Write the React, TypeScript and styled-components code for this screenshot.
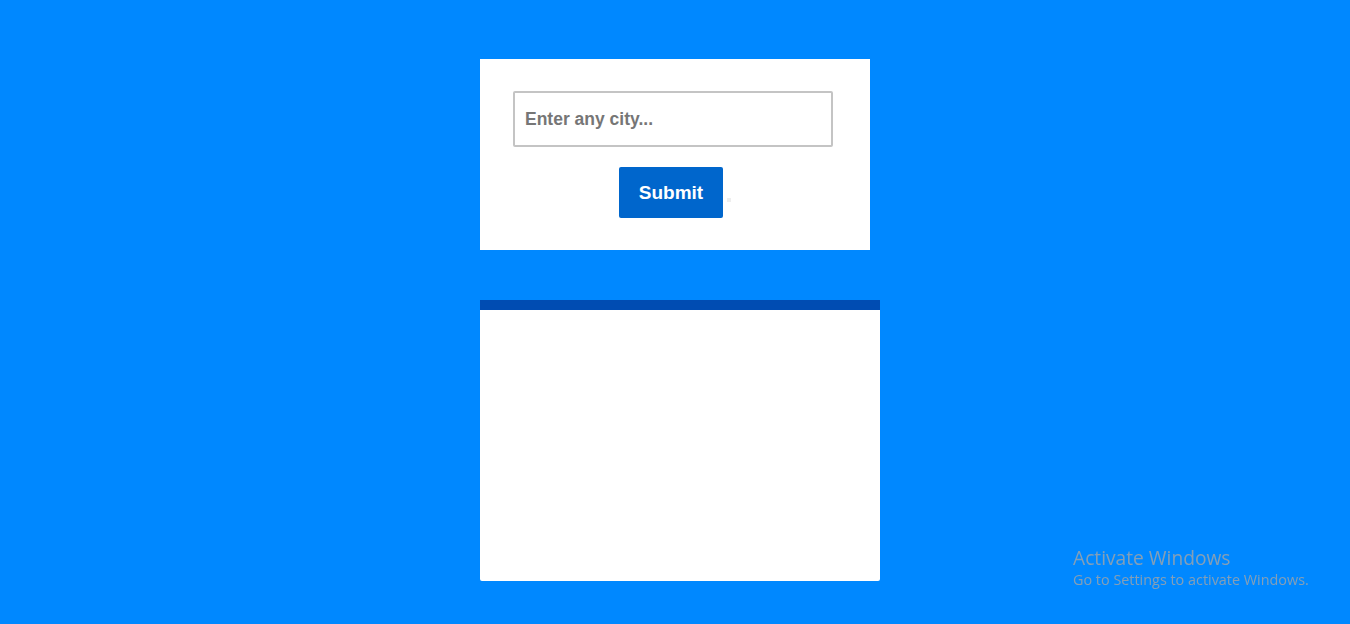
import React from "react";
import styled, { createGlobalStyle } from "styled-components";

const Global = createGlobalStyle`
  html, body { margin: 0; padding: 0; background: #0088ff; }
  body { font-family: "Liberation Sans", Arial, sans-serif; min-height: 624px; }
`;

const Page = styled.div`
  width: 390px;
  margin: 0 auto;
  padding-top: 59px;
  display: flex;
  flex-direction: column;
  gap: 50px;
`;

const SearchCard = styled.form`
  width: 390px;
  height: 191px;
  box-sizing: border-box;
  background: #fff;
  padding-top: 32px;
  display: flex;
  flex-direction: column;
  align-items: center;
`;

const CityInput = styled.input`
  width: 320px;
  height: 56px;
  box-sizing: border-box;
  margin-right: 4px;
  border: 2px solid #c4c4c4;
  border-radius: 2px;
  padding: 0 10px;
  font-family: "Liberation Sans", Arial, sans-serif;
  font-size: 17.5px;
  font-weight: bold;
  color: #555;
  outline: none;
  &::placeholder { color: #767676; opacity: 1; }
`;

const ButtonRow = styled.div`
  margin-top: 20px;
  display: flex;
  align-items: flex-end;
  gap: 4px;
`;

const SubmitButton = styled.button`
  width: 104px;
  height: 51px;
  border: none;
  border-radius: 2px;
  background: #0066cc;
  color: #fff;
  font-family: "Liberation Sans", Arial, sans-serif;
  font-size: 19px;
  font-weight: bold;
  cursor: pointer;
`;

const Dot = styled.span`
  width: 4px;
  height: 4px;
  background: #eeeeee;
  margin-bottom: 16px;
`;

const ResultCard = styled.div`
  width: 400px;
  height: 281px;
  box-sizing: border-box;
  background: #fff;
  border-top: 10px solid #004cb2;
  border-radius: 0 0 2px 2px;
`;

const Watermark = styled.div`
  position: fixed;
  left: 1073px;
  top: 546px;
  font-family: "Open Sans", "Noto Sans", sans-serif;
  color: rgba(165, 165, 165, 0.8);
  pointer-events: none;
`;

const WatermarkTitle = styled.div`
  font-size: 19.2px;
  line-height: 24px;
`;

const WatermarkSub = styled.div`
  font-size: 14.4px;
  line-height: 20px;
`;

export default function App() {
  return (
    <>
      <Global />
      <Page>
        <SearchCard onSubmit={(e) => e.preventDefault()}>
          <CityInput placeholder="Enter any city..." />
          <ButtonRow>
            <SubmitButton type="submit">Submit</SubmitButton>
            <Dot />
          </ButtonRow>
        </SearchCard>
        <ResultCard />
      </Page>
      <Watermark>
        <WatermarkTitle>Activate Windows</WatermarkTitle>
        <WatermarkSub>Go to Settings to activate Windows.</WatermarkSub>
      </Watermark>
    </>
  );
}
